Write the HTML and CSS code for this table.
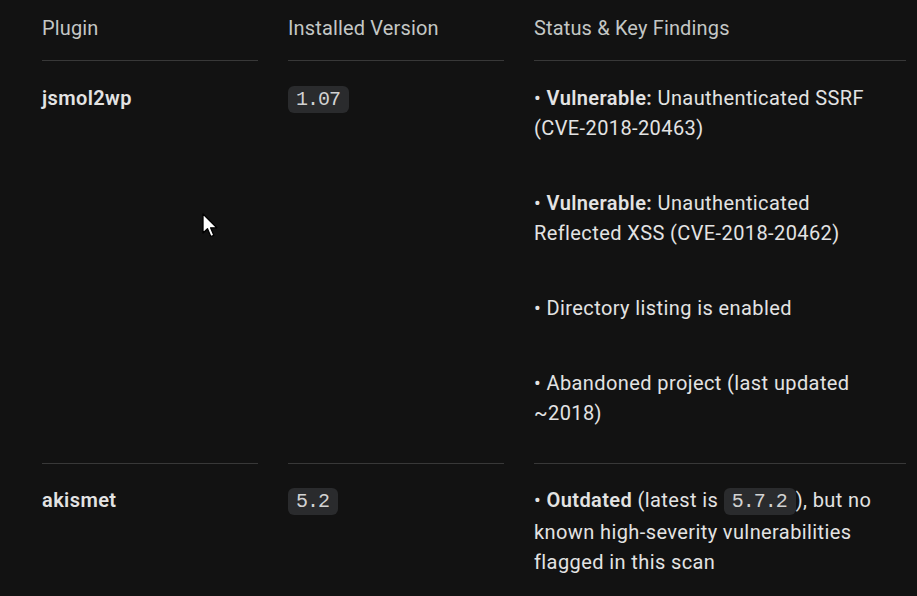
FILE: index.html
```html
<!DOCTYPE html>
<html lang="en">
<head>
<meta charset="utf-8">
<title>Plugin findings</title>
<link rel="stylesheet" href="styles.css">
</head>
<body>
<div class="page">
  <div class="grid">
    <div class="cell head">Plugin</div>
    <div class="cell head">Installed Version</div>
    <div class="cell head">Status &amp; Key Findings</div>

    <div class="cell row"><span class="name">jsmol2wp</span></div>
    <div class="cell row"><code class="chip">1.07</code></div>
    <div class="cell row findings">
      <p>• <b>Vulnerable:</b> Unauthenticated SSRF (CVE-2018-20463)</p>
      <p>• <b>Vulnerable:</b> Unauthenticated Reflected XSS (CVE-2018-20462)</p>
      <p>• Directory listing is enabled</p>
      <p>• Abandoned project (last updated ~2018)</p>
    </div>

    <div class="cell row last"><span class="name">akismet</span></div>
    <div class="cell row last"><code class="chip">5.2</code></div>
    <div class="cell row last findings">
      <p>• <b>Outdated</b> (latest is <code class="chip">5.7.2</code>), but no known high-severity vulnerabilities flagged in this scan</p>
    </div>
  </div>
  <svg class="cursor" width="17" height="27" viewBox="0 0 17 27" aria-hidden="true">
    <path d="M1 1 L1 20 L5.5 15.8 L8.8 23.5 L11.8 22.3 L8.6 14.8 L14.8 14.8 Z" fill="#fff" stroke="#000" stroke-width="1.3" stroke-linejoin="round"/>
  </svg>
</div>
</body>
</html>
```

FILE: styles.css
```css
html, body {
  margin: 0;
  padding: 0;
  background: #121212;
}
body {
  font-family: Roboto, "Noto Sans", "Liberation Sans", sans-serif;
  font-size: 20px;
  line-height: 30px;
  letter-spacing: 0.4px;
  color: #e3e3e3;
  overflow: hidden;
  width: 917px;
  height: 596px;
}
.page {
  position: relative;
  padding-left: 42px;
}
.grid {
  display: grid;
  grid-template-columns: 216px 216px 372px;
  column-gap: 30px;
}
.cell {
  border-bottom: 1px solid #383838;
}
.head {
  color: #c4c7c5;
  letter-spacing: 0.15px;
  padding: 13px 0 17px;
}
.row {
  padding: 22px 0 35px;
}
.row.last {
  padding-top: 21px;
  border-bottom: none;
}
.findings {
  padding-right: 8px;
}
.name {
  font-weight: 600;
}
.findings p {
  margin: 0 0 45px;
}
.findings p:last-child {
  margin-bottom: 0;
}
.findings b {
  font-weight: 600;
}
.chip {
  font-family: "Liberation Mono", "DejaVu Sans Mono", monospace;
  font-size: 20px;
  letter-spacing: -1px;
  color: #d2d2d2;
  background: #2a2b2d;
  border-radius: 6px;
  padding: 2px 9px 2px 8px;
}
.cursor {
  position: absolute;
  left: 202px;
  top: 213px;
}
```
